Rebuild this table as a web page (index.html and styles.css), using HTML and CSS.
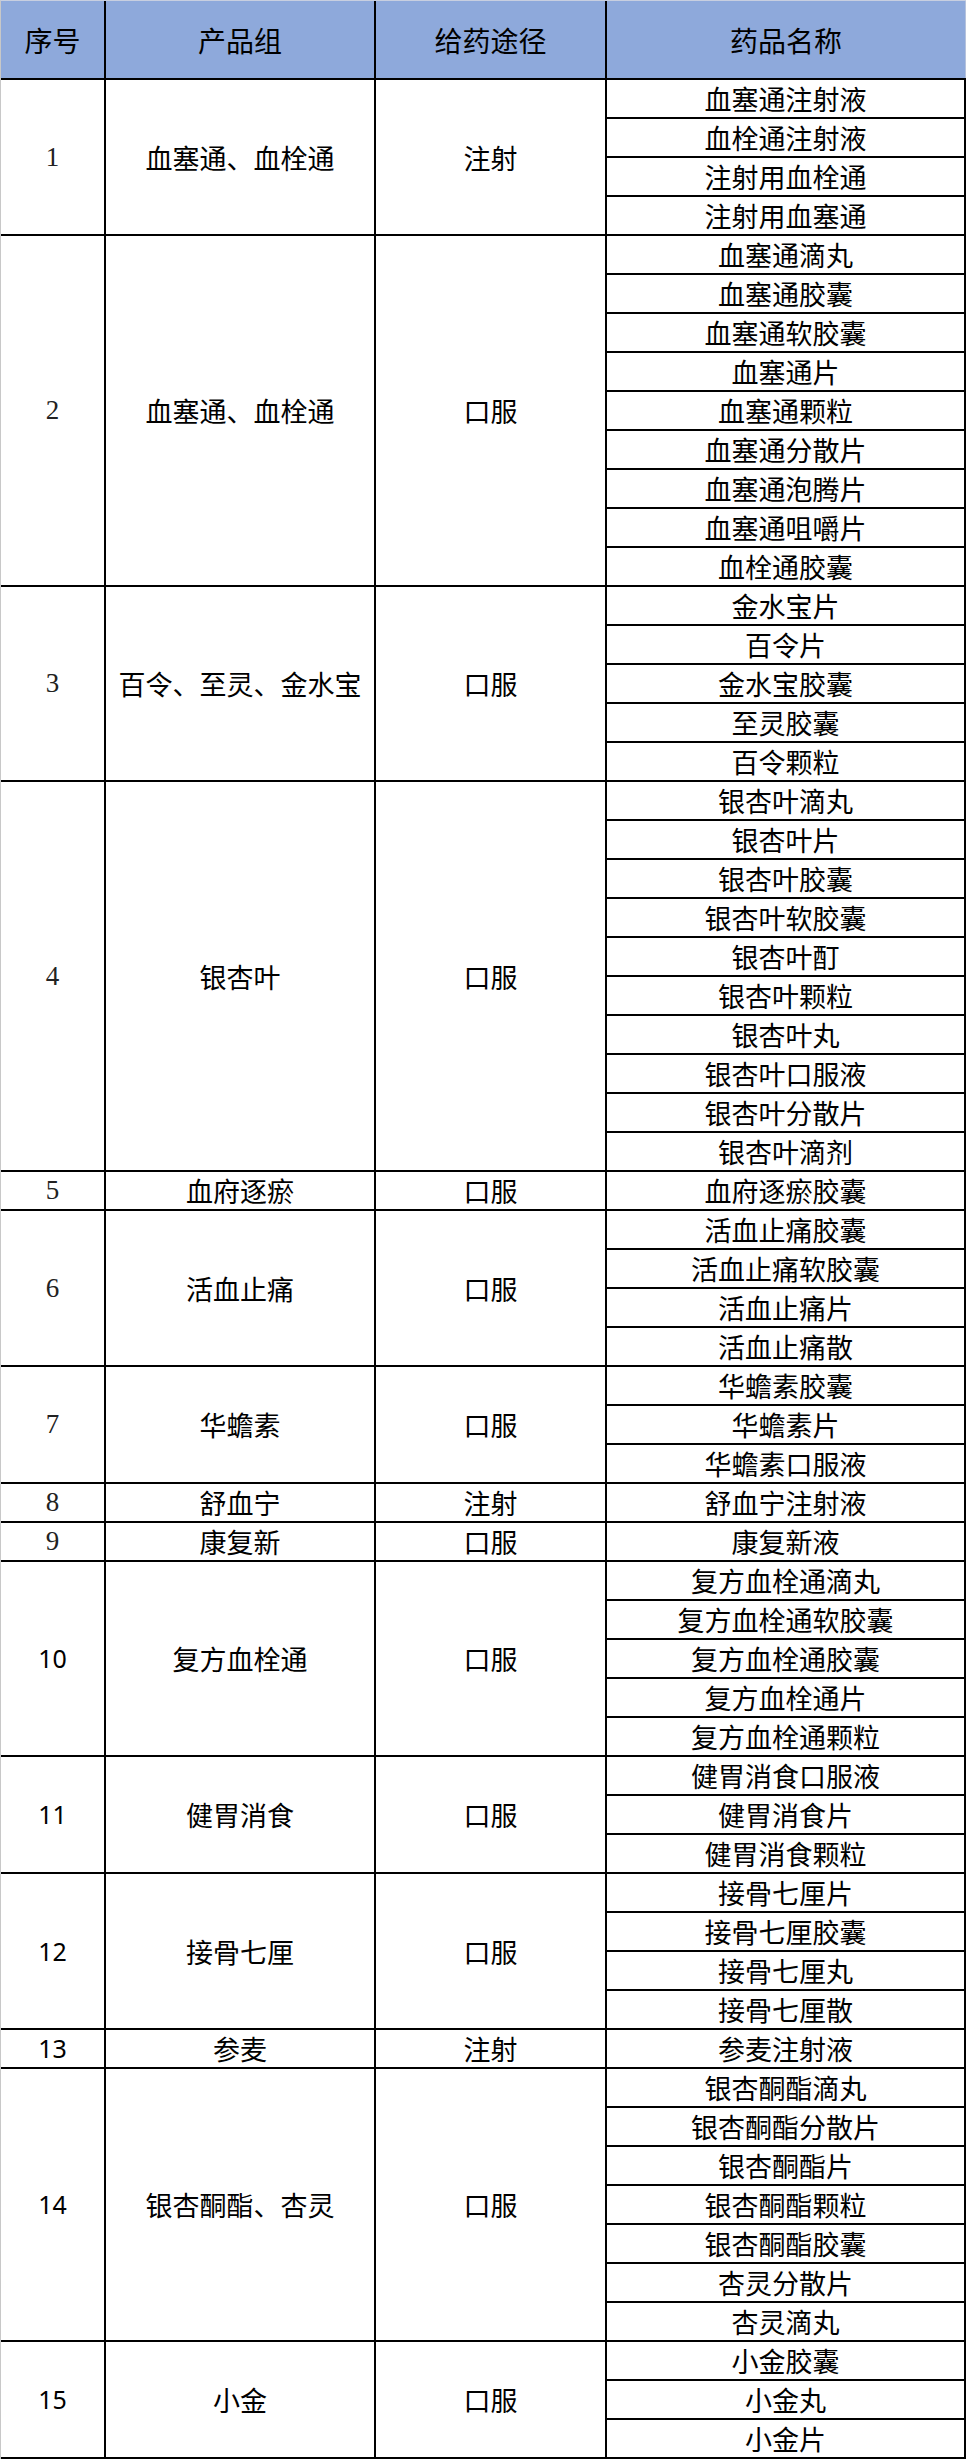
FILE: index.html
```html
<!DOCTYPE html>
<html lang="zh-CN">
<head>
<meta charset="utf-8">
<title>产品组</title>
<link rel="stylesheet" href="styles.css">
</head>
<body>
<div class="table">
  <div class="row head">
    <div class="cell">序号</div>
    <div class="cell">产品组</div>
    <div class="cell">给药途径</div>
    <div class="cell last">药品名称</div>
  </div>
  <div class="row">
    <div class="cell num serif">1</div><div class="cell">血塞通、血栓通</div><div class="cell">注射</div>
    <div class="names"><div class="cell name">血塞通注射液</div><div class="cell name">血栓通注射液</div><div class="cell name">注射用血栓通</div><div class="cell name">注射用血塞通</div></div>
  </div>
  <div class="row">
    <div class="cell num serif">2</div><div class="cell">血塞通、血栓通</div><div class="cell">口服</div>
    <div class="names"><div class="cell name">血塞通滴丸</div><div class="cell name">血塞通胶囊</div><div class="cell name">血塞通软胶囊</div><div class="cell name">血塞通片</div><div class="cell name">血塞通颗粒</div><div class="cell name">血塞通分散片</div><div class="cell name">血塞通泡腾片</div><div class="cell name">血塞通咀嚼片</div><div class="cell name">血栓通胶囊</div></div>
  </div>
  <div class="row">
    <div class="cell num serif">3</div><div class="cell">百令、至灵、金水宝</div><div class="cell">口服</div>
    <div class="names"><div class="cell name">金水宝片</div><div class="cell name">百令片</div><div class="cell name">金水宝胶囊</div><div class="cell name">至灵胶囊</div><div class="cell name">百令颗粒</div></div>
  </div>
  <div class="row">
    <div class="cell num serif">4</div><div class="cell">银杏叶</div><div class="cell">口服</div>
    <div class="names"><div class="cell name">银杏叶滴丸</div><div class="cell name">银杏叶片</div><div class="cell name">银杏叶胶囊</div><div class="cell name">银杏叶软胶囊</div><div class="cell name">银杏叶酊</div><div class="cell name">银杏叶颗粒</div><div class="cell name">银杏叶丸</div><div class="cell name">银杏叶口服液</div><div class="cell name">银杏叶分散片</div><div class="cell name">银杏叶滴剂</div></div>
  </div>
  <div class="row">
    <div class="cell num serif">5</div><div class="cell">血府逐瘀</div><div class="cell">口服</div>
    <div class="names"><div class="cell name">血府逐瘀胶囊</div></div>
  </div>
  <div class="row">
    <div class="cell num serif">6</div><div class="cell">活血止痛</div><div class="cell">口服</div>
    <div class="names"><div class="cell name">活血止痛胶囊</div><div class="cell name">活血止痛软胶囊</div><div class="cell name">活血止痛片</div><div class="cell name">活血止痛散</div></div>
  </div>
  <div class="row">
    <div class="cell num serif">7</div><div class="cell">华蟾素</div><div class="cell">口服</div>
    <div class="names"><div class="cell name">华蟾素胶囊</div><div class="cell name">华蟾素片</div><div class="cell name">华蟾素口服液</div></div>
  </div>
  <div class="row">
    <div class="cell num serif">8</div><div class="cell">舒血宁</div><div class="cell">注射</div>
    <div class="names"><div class="cell name">舒血宁注射液</div></div>
  </div>
  <div class="row">
    <div class="cell num serif">9</div><div class="cell">康复新</div><div class="cell">口服</div>
    <div class="names"><div class="cell name">康复新液</div></div>
  </div>
  <div class="row">
    <div class="cell num sans">10</div><div class="cell">复方血栓通</div><div class="cell">口服</div>
    <div class="names"><div class="cell name">复方血栓通滴丸</div><div class="cell name">复方血栓通软胶囊</div><div class="cell name">复方血栓通胶囊</div><div class="cell name">复方血栓通片</div><div class="cell name">复方血栓通颗粒</div></div>
  </div>
  <div class="row">
    <div class="cell num sans">11</div><div class="cell">健胃消食</div><div class="cell">口服</div>
    <div class="names"><div class="cell name">健胃消食口服液</div><div class="cell name">健胃消食片</div><div class="cell name">健胃消食颗粒</div></div>
  </div>
  <div class="row">
    <div class="cell num sans">12</div><div class="cell">接骨七厘</div><div class="cell">口服</div>
    <div class="names"><div class="cell name">接骨七厘片</div><div class="cell name">接骨七厘胶囊</div><div class="cell name">接骨七厘丸</div><div class="cell name">接骨七厘散</div></div>
  </div>
  <div class="row">
    <div class="cell num sans">13</div><div class="cell">参麦</div><div class="cell">注射</div>
    <div class="names"><div class="cell name">参麦注射液</div></div>
  </div>
  <div class="row">
    <div class="cell num sans">14</div><div class="cell">银杏酮酯、杏灵</div><div class="cell">口服</div>
    <div class="names"><div class="cell name">银杏酮酯滴丸</div><div class="cell name">银杏酮酯分散片</div><div class="cell name">银杏酮酯片</div><div class="cell name">银杏酮酯颗粒</div><div class="cell name">银杏酮酯胶囊</div><div class="cell name">杏灵分散片</div><div class="cell name">杏灵滴丸</div></div>
  </div>
  <div class="row">
    <div class="cell num sans">15</div><div class="cell">小金</div><div class="cell">口服</div>
    <div class="names"><div class="cell name">小金胶囊</div><div class="cell name">小金丸</div><div class="cell name">小金片</div></div>
  </div>
</div>
</body>
</html>
```
FILE: styles.css
```css
html, body {
  margin: 0;
  padding: 0;
  background: #fff;
}
body {
  font-family: "Noto Sans CJK SC", "Noto Sans", sans-serif;
  color: #000;
}
.table {
  width: 966px;
  box-sizing: border-box;
  display: flex;
  flex-direction: column;
  gap: 2px;
  background: #000;
  border-left: 1px solid #c8c8c8;
  border-top: 1px solid #c8cfe0;
  padding-right: 2px;
  padding-bottom: 2px;
}
.row {
  display: grid;
  grid-template-columns: 103px 268px 229px 1fr;
  gap: 2px;
}
.cell {
  background: #fff;
  display: flex;
  align-items: center;
  justify-content: center;
  font-size: 27px;
  line-height: 1;
  white-space: nowrap;
}
.head .cell {
  background: #8ea9db;
  height: 77px;
  font-size: 28px;
}
.head .last {
  margin-right: -2px;
  border-right: 1px solid #b5c2dc;
}
.names {
  display: flex;
  flex-direction: column;
  gap: 2px;
}
.name {
  height: 37px;
}
.serif {
  font-family: "Liberation Serif", serif;
  font-size: 27px;
  color: #222;
}
.sans {
  font-family: "Noto Sans", "Liberation Sans", sans-serif;
  font-size: 25px;
}
```
